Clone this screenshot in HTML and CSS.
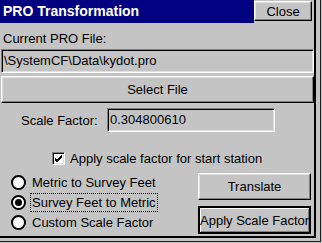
FILE: index.html
```
<html>

<head>
	<title>PRO Transformation</title>
	<link rel="stylesheet" href="styles.css">
</head>

<body>
	<div class="screen">
		<div class="dialog">
			<div class="titlebar">
				<div class="titlebar__text">PRO Transformation</div>
				<button type="button" class="button button--close">Close</button>
			</div>
			<div class="label">Current PRO File:</div>
			<div class="field field--file">\SystemCF\Data\kydot.pro</div>
			<button type="button" class="button button--wide">Select File</button>
			<div class="scale">
				<span class="scale__label">Scale Factor:</span>
				<div class="field field--scale">0.304800610</div>
			</div>
			<label class="check">
				<span class="check__box">
					<svg width="9" height="9" viewBox="0 0 9 9">
						<path d="M1 4 L3 6 L8 1 M1 5 L3 7 L8 2 M1 6 L3 8 L8 3" stroke="#000" stroke-width="1" fill="none" />
					</svg>
				</span>
				Apply scale factor for start station
			</label>
			<div class="lower">
				<div class="radios">
					<div class="radio">
						<span class="radio__dot"></span>
						<span class="radio__label">Metric to Survey Feet</span>
					</div>
					<div class="radio">
						<span class="radio__dot radio__dot--on"></span>
						<span class="radio__label radio__label--focus">Survey Feet to Metric</span>
					</div>
					<div class="radio">
						<span class="radio__dot"></span>
						<span class="radio__label">Custom Scale Factor</span>
					</div>
				</div>
				<div class="actions">
					<button type="button" class="button button--action">Translate</button>
					<button type="button" class="button button--action button--default">Apply Scale Factor</button>
				</div>
			</div>
		</div>
	</div>
</body>

</html>
```

FILE: styles.css
```
* {
	margin: 0;
	padding: 0;
	box-sizing: border-box;
}

button {
	outline: none;
	font: inherit;
	color: #000;
	padding: 0;
	white-space: nowrap;
}

body {
	width: 322px;
	height: 243px;
	overflow: hidden;
	background-color: #c4c4c4;
	font-family: "Liberation Sans", Arial, sans-serif;
	font-size: 13px;
	color: #000;
}

.screen {
	width: 321px;
	height: 242px;
	border-right: 1px solid #202020;
	border-bottom: 1px solid #202020;
}

.dialog {
	width: 316px;
	height: 238px;
	border-right: 2px solid #000;
	border-bottom: 2px solid #000;
}

.titlebar {
	display: flex;
	height: 23px;
}

.titlebar__text {
	width: 254px;
	height: 23px;
	padding-left: 3px;
	line-height: 22px;
	background-color: #000080;
	color: #fff;
	font-size: 14px;
	font-weight: bold;
}

.button {
	background-color: #c4c4c4;
	border: 1px solid;
	border-color: #fff #000 #000 #fff;
	box-shadow: inset -1px -1px #808080, inset 1px 1px #e0e0e0;
	text-align: center;
}

.button--close {
	width: 58px;
	height: 20px;
	margin-top: 1px;
}

.label {
	height: 26px;
	padding: 8px 3px 0;
	line-height: 16px;
}

.field {
	height: 24px;
	padding-left: 2px;
	line-height: 22px;
	white-space: nowrap;
	border: 1px solid;
	border-color: #808080 #fff #fff #808080;
	box-shadow: inset 1px 1px #000, inset -1px -1px #e0e0e0;
}

.field--file {
	width: 313px;
	margin-left: 1px;
}

.button--wide {
	display: block;
	width: 313px;
	height: 27px;
	margin: 3px 0 0 1px;
}

.scale {
	display: flex;
	align-items: center;
	height: 24px;
	margin-top: 5px;
}

.scale__label {
	width: 107px;
	padding-left: 21px;
}

.field--scale {
	width: 168px;
}

.check {
	display: flex;
	align-items: center;
	gap: 5px;
	height: 13px;
	margin: 20px 0 0 52px;
}

.check__box {
	display: flex;
	align-items: center;
	justify-content: center;
	width: 13px;
	height: 13px;
	background-color: #fff;
	border: 1px solid;
	border-color: #808080 #fff #fff #808080;
	box-shadow: inset 1px 1px #000, inset -1px -1px #e0e0e0;
}

.lower {
	display: flex;
	justify-content: space-between;
	padding-right: 3px;
}

.radios {
	display: flex;
	flex-direction: column;
	padding: 7px 0 0 11px;
}

.radio {
	display: flex;
	align-items: center;
	gap: 4px;
	height: 20px;
}

.radio__dot {
	display: flex;
	align-items: center;
	justify-content: center;
	width: 15px;
	height: 15px;
	border: 2px solid #000;
	border-radius: 50%;
	background-color: #fff;
}

.radio__dot--on::after {
	content: "";
	width: 7px;
	height: 7px;
	border-radius: 50%;
	background-color: #000;
}

.radio__label {
	padding: 1px 1px;
	border: 1px solid transparent;
}

.radio__label--focus {
	border: 1px dotted #000;
}

.actions {
	display: flex;
	flex-direction: column;
	gap: 6px;
	padding-top: 8px;
}

.button--action {
	width: 113px;
	height: 27px;
}

.button--default {
	height: 28px;
	border: 2px solid #000;
	box-shadow: inset 1px 1px #fff, inset -1px -1px #808080;
}
```
